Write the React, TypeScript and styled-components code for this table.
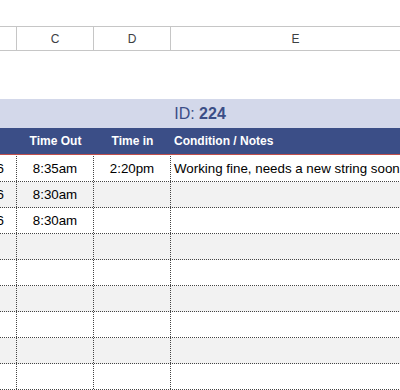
import React from 'react'
import styled, { createGlobalStyle } from 'styled-components'

const GlobalStyle = createGlobalStyle`
  html, body {
    margin: 0;
    padding: 0;
    background: #ffffff;
  }
  body {
    font-family: 'Liberation Sans', Arial, sans-serif;
    overflow: hidden;
  }
`

interface LogRow {
   date: string
   timeOut: string
   timeIn: string
   notes: string
}

const rows: LogRow[] = [
   { date: '1/4/2016', timeOut: '8:35am', timeIn: '2:20pm', notes: 'Working fine, needs a new string soon' },
   { date: '1/5/2016', timeOut: '8:30am', timeIn: '', notes: '' },
   { date: '1/6/2016', timeOut: '8:30am', timeIn: '', notes: '' },
   { date: '', timeOut: '', timeIn: '', notes: '' },
   { date: '', timeOut: '', timeIn: '', notes: '' },
   { date: '', timeOut: '', timeIn: '', notes: '' },
   { date: '', timeOut: '', timeIn: '', notes: '' },
   { date: '', timeOut: '', timeIn: '', notes: '' },
   { date: '', timeOut: '', timeIn: '', notes: '' },
   { date: '', timeOut: '', timeIn: '', notes: '' },
]

const columns = ['B', 'C', 'D', 'E']

const App: React.FC = () => {

   return (
      <>
         <GlobalStyle />
         <Viewport>
            <Sheet>
               <ColumnBar>
                  {columns.map((c) => (
                     <ColumnLetter key={c}>{c}</ColumnLetter>
                  ))}
               </ColumnBar>

               <TitleBand>
                  <TitleText>
                     ID: <strong>224</strong>
                  </TitleText>
               </TitleBand>

               <HeaderRow>
                  <HeaderCell>Date</HeaderCell>
                  <HeaderCell>Time Out</HeaderCell>
                  <HeaderCell>Time in</HeaderCell>
                  <HeaderCell $left>Condition / Notes</HeaderCell>
               </HeaderRow>

               {rows.map((r, i) => (
                  <DataRow key={i} $shaded={i % 2 === 1} $first={i === 0}>
                     <Cell>{r.date}</Cell>
                     <Cell>{r.timeOut}</Cell>
                     <Cell>{r.timeIn}</Cell>
                     <Cell $left>{r.notes}</Cell>
                  </DataRow>
               ))}
            </Sheet>
         </Viewport>
      </>
   )
}

export default App


const gridColumns = '77px 77px 77px 250px'

const Viewport = styled.div`
  width: 400px;
  height: 390px;
  overflow: hidden;
`

const Sheet = styled.div`
  width: 481px;
  margin-left: -60px;
  padding-top: 26px;
`

const ColumnBar = styled.div`
  display: grid;
  grid-template-columns: ${gridColumns};
  height: 25px;
  box-sizing: border-box;
  border-top: 1px solid #c6c6c6;
  border-bottom: 1px solid #c6c6c6;
  margin-bottom: 48px;
`

const ColumnLetter = styled.div`
  display: flex;
  align-items: center;
  justify-content: center;
  border-right: 1px solid #c6c6c6;
  font-size: 12px;
  color: #3c4043;
`

const TitleBand = styled.div`
  display: flex;
  align-items: center;
  justify-content: center;
  height: 29px;
  padding-left: 60px;
  padding-right: 21px;
  background: #d3d8ea;
`

const TitleText = styled.div`
  font-size: 16px;
  color: #3b4e87;

  strong {
    font-weight: 700;
  }
`

const HeaderRow = styled.div`
  display: grid;
  grid-template-columns: ${gridColumns};
  height: 27px;
  box-sizing: border-box;
  background: #3b4e87;
  border-bottom: 1px solid #c0504d;
`

const HeaderCell = styled.div<{ $left?: boolean }>`
  display: flex;
  align-items: center;
  justify-content: ${(p) => (p.$left ? 'flex-start' : 'center')};
  padding-left: ${(p) => (p.$left ? '3px' : '0')};
  color: #ffffff;
  font-size: 12px;
  font-weight: 700;
  white-space: nowrap;
`

const DataRow = styled.div<{ $shaded: boolean; $first: boolean }>`
  display: grid;
  grid-template-columns: ${gridColumns};
  height: ${(p) => (p.$first ? '27px' : '26px')};
  box-sizing: border-box;
  padding-top: ${(p) => (p.$first ? '1px' : '0')};
  background: ${(p) => (p.$shaded ? '#f2f2f2' : '#ffffff')};
  border-bottom: 1px dotted #444444;
`

const Cell = styled.div<{ $left?: boolean }>`
  display: flex;
  align-items: center;
  justify-content: ${(p) => (p.$left ? 'flex-start' : 'center')};
  padding-left: ${(p) => (p.$left ? '3px' : '0')};
  border-right: 1px dotted #444444;
  font-size: 13.33px;
  color: #000000;
  white-space: nowrap;
  overflow: hidden;
`
